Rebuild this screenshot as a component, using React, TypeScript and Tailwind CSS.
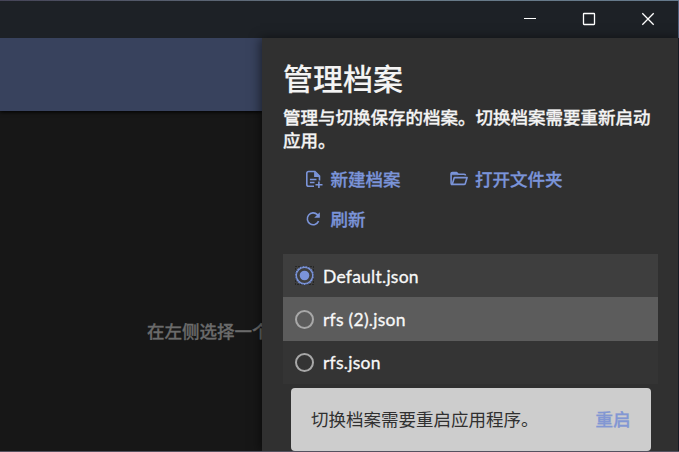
import type { ReactNode } from 'react';

function ActionButton({ icon, label, className = '' }: { icon: ReactNode; label: string; className?: string }) {
  return (
    <button className={`flex h-10 items-center text-[17.5px] leading-6 font-medium text-[#7b94d9] [-webkit-text-stroke:0.3px] ${className}`}>
      <span className="mr-[7.5px] flex size-[18px] items-center justify-center">{icon}</span>
      {label}
    </button>
  );
}

function NewFileIcon() {
  return (
    <svg viewBox="0 0 18 18" className="size-[18px] shrink-0" fill="none" stroke="currentColor" strokeWidth="1.6">
      <path d="M9 16.3H3.7Q1.8 16.3 1.8 14.5V3.3Q1.8 1.5 3.7 1.5H9.9L14.5 6.1V10.5" />
      <path d="M9.1 1.5V6.9H14.8Z" fill="currentColor" stroke="none" />
      <path d="M4.9 9.5H11.5M4.9 12.5H9.5M13.9 11.4V18M10.5 14.8H17.5" />
    </svg>
  );
}

function FolderIcon() {
  return (
    <svg viewBox="0 0 18 18" className="size-[18px] shrink-0" fill="none" stroke="currentColor" strokeWidth="1.6" strokeLinejoin="round">
      <path d="M2.2 14.8Q1.1 14.5 1.1 13.2V3.7Q1.1 2.5 2.3 2.5H6.6L8.3 4.2H14.2Q15.5 4.2 15.5 5.4" />
      <path d="M1.1 3H7L8.3 4.8H1.1Z" fill="currentColor" strokeWidth="0.5" />
      <path d="M2.2 14.4L4.3 7.6H17.1L15.3 13.4Q15 14.4 14 14.4Z" />
    </svg>
  );
}

function RefreshIcon() {
  return (
    <svg viewBox="0 0 18 18" className="size-[18px] shrink-0" fill="none" stroke="currentColor" strokeWidth="1.6">
      <path d="M13.6 11.2A5.9 5.9 0 1 1 12.4 4.6L14 6.4" />
      <path d="M14.8 2.2V7.8H9.2Z" fill="currentColor" stroke="none" />
    </svg>
  );
}

function ProfileRow({ name, checked = false, className }: { name: string; checked?: boolean; className: string }) {
  return (
    <div className={`flex items-center pl-3 ${className}`}>
      {checked ? (
        <svg viewBox="0 0 19 19" className="size-[19px]" fill="none">
          <rect x=".5" y=".5" width="18" height="18" stroke="#111" strokeDasharray="1 2" />
          <circle cx="9.5" cy="9.5" r="8.5" stroke="#7b94d9" strokeWidth="1.9" />
          <circle cx="9.5" cy="9.5" r="9" stroke="#20252f" strokeWidth="0.8" strokeDasharray="1 2" />
          <circle cx="9.5" cy="9.5" r="4.8" fill="#7b94d9" />
        </svg>
      ) : (
        <span className="size-[19px] rounded-full border-2 border-[#a8a8a8]" />
      )}
      <span className={`ml-[9px] text-[17.5px] leading-6 tracking-[0.25px] text-[#f8f8f8] [-webkit-text-stroke:0.3px] ${checked ? 'mt-[3px]' : 'mt-px'}`}>{name}</span>
    </div>
  );
}

export default function App() {
  return (
    <div className="flex h-[452px] w-[679px] flex-col overflow-hidden bg-[#171717] font-['Noto_Sans_CJK_SC',sans-serif]">
      <div className="h-px shrink-0 bg-linear-to-r from-[#454457] via-[#687985] to-[#65798c]" />
      <header className="flex h-[37px] shrink-0 items-start justify-end gap-[45px] border-r border-[#53627f] bg-[#1d2126] pt-[11px] pr-[23px] text-white">
        <svg viewBox="0 0 14 14" className="size-[14px]" fill="none" stroke="currentColor">
          <path d="M1 6.5H13" />
        </svg>
        <svg viewBox="0 0 14 14" className="size-[14px]" fill="none" stroke="currentColor" strokeWidth="1.3">
          <rect x="1.5" y="1.5" width="11" height="11" rx="0.5" />
        </svg>
        <svg viewBox="0 0 14 14" className="size-[14px]" fill="none" stroke="currentColor" strokeWidth="1.3">
          <path d="M1.3 1.3L12.7 12.7M12.7 1.3L1.3 12.7" />
        </svg>
      </header>
      <main className="flex min-h-0 flex-1">
        <section className="flex w-[262px] shrink-0 flex-col overflow-hidden">
          <div className="h-[73px] shrink-0 bg-[#38425d] shadow-[0_1px_4px_#000]" />
          <p className="mt-[208px] ml-[147px] text-[17.5px] leading-6 font-medium whitespace-nowrap text-[#6b6b6b] [-webkit-text-stroke:0.3px]">在左侧选择一个</p>
        </section>
        <aside className="flex min-w-0 flex-1 flex-col border-r border-[#171a25] bg-[#303030] pl-[21px] shadow-[-2px_0_10px_rgba(0,0,0,0.5)]">
          <h1 className="mt-[19px] text-[30px] leading-10 font-medium text-[#f4f4f4] [-webkit-text-stroke:0.1px]">管理档案</h1>
          <p className="mt-[8px] w-[375px] text-[17.5px] leading-[23px] font-medium text-[#f4f4f4] [-webkit-text-stroke:0.3px]">
            管理与切换保存的档案。切换档案需要重新启动应用。
          </p>
          <div className="mt-[8px] ml-[22px] flex w-[353px] flex-wrap">
            <ActionButton icon={<NewFileIcon />} label="新建档案" className="w-[144.5px]" />
            <ActionButton icon={<FolderIcon />} label="打开文件夹" />
            <ActionButton icon={<RefreshIcon />} label="刷新" className="w-[144.5px]" />
          </div>
          <div className="mt-[15px] w-[375px] font-['Lato','Noto_Sans_CJK_SC',sans-serif]">
            <ProfileRow name="Default.json" checked className="h-[43px] bg-[#3e3e3e]" />
            <ProfileRow name="rfs (2).json" className="h-11 bg-[#5c5c5c]" />
            <ProfileRow name="rfs.json" className="h-[43px] bg-[#343434]" />
          </div>
          <div className="mt-1 ml-2 flex h-[63px] w-[360px] shrink-0 items-center justify-between rounded bg-[#cdcdcd] pb-px pr-[20.5px] pl-5 text-[17.5px] text-[#303030]">
            <span>切换档案需要重启应用程序。</span>
            <button className="font-medium text-[#8297d3] [-webkit-text-stroke:0.3px]">重启</button>
          </div>
        </aside>
      </main>
      <div className="h-px shrink-0 bg-[#555260]" />
    </div>
  );
}
